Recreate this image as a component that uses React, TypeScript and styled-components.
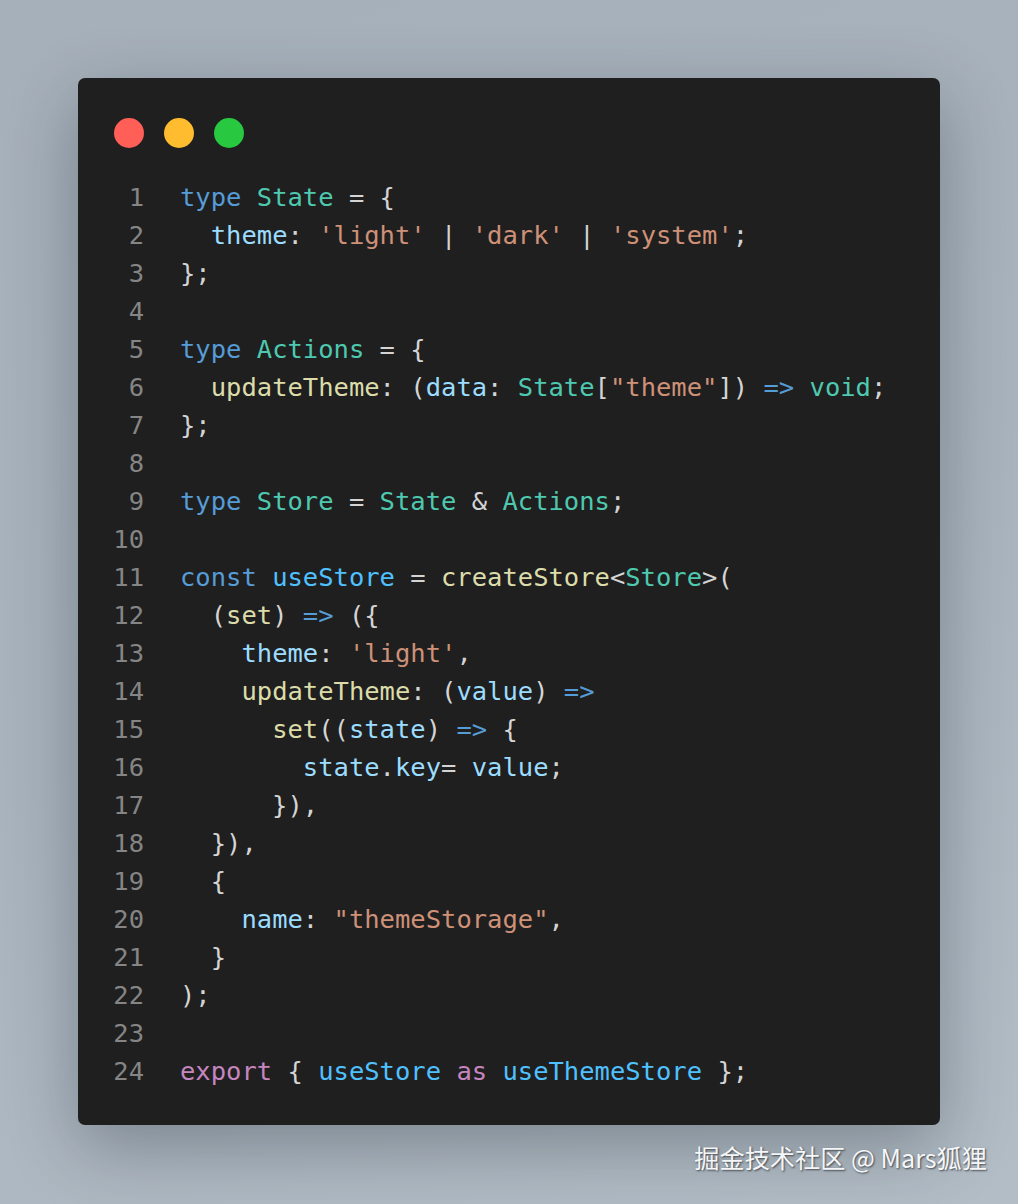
import React from "react";
import styled, { createGlobalStyle } from "styled-components";

const Global = createGlobalStyle`
  html, body { margin: 0; padding: 0; }
  body {
    width: 1018px;
    height: 1204px;
    overflow: hidden;
    background: linear-gradient(160deg, #a6b0ba 0%, #a9b3bd 50%, #b3bdc6 100%);
  }
`;

const Page = styled.div`
  width: 1018px;
  height: 1204px;
  box-sizing: border-box;
  padding: 78px 78px 0 78px;
  display: flex;
  flex-direction: column;
`;

const Window = styled.div`
  width: 862px;
  height: 1047px;
  box-sizing: border-box;
  background: #1f1f1f;
  border-radius: 7px;
  box-shadow: 0 22px 70px rgba(20, 28, 38, 0.32);
  padding: 40px 36px 0 35px;
  display: flex;
  flex-direction: column;
  gap: 30px;
`;

const Dots = styled.div`
  display: flex;
  gap: 20px;
  padding-left: 1px;
`;

const Dot = styled.span<{ $c: string }>`
  width: 30px;
  height: 30px;
  border-radius: 50%;
  background: ${(p) => p.$c};
`;

const Code = styled.div`
  display: flex;
  flex-direction: column;
  font-family: "DejaVu Sans Mono", "Liberation Mono", monospace;
  font-size: 25.5px;
  line-height: 38px;
`;

const Row = styled.div`
  display: flex;
  height: 38px;
  white-space: pre;
`;

const LineNo = styled.span`
  width: 31px;
  text-align: right;
  color: #858585;
  margin-right: 36px;
  flex: none;
`;

const Tok = styled.span<{ $c: string }>`
  color: ${(p) => p.$c};
`;

const Watermark = styled.div`
  align-self: flex-end;
  margin-right: -47px;
  margin-top: 14px;
  font-family: "Noto Sans CJK SC", "Noto Sans", sans-serif;
  font-size: 25.2px;
  color: #f4f6f8;
  text-shadow: 1px 1px 2px rgba(40, 44, 50, 0.8);
`;

const C = {
  kw: "#569cd6",
  ty: "#4ec9b0",
  pr: "#9cdcfe",
  st: "#ce9178",
  fn: "#dcdcaa",
  p: "#d4d4d4",
  ex: "#c586c0",
  cv: "#4fc1ff",
};

type T = [string, string];

const lines: T[][] = [
  [["type", C.kw], [" ", C.p], ["State", C.ty], [" = {", C.p]],
  [["  ", C.p], ["theme", C.pr], [": ", C.p], ["'light'", C.st], [" | ", C.p], ["'dark'", C.st], [" | ", C.p], ["'system'", C.st], [";", C.p]],
  [["};", C.p]],
  [],
  [["type", C.kw], [" ", C.p], ["Actions", C.ty], [" = {", C.p]],
  [["  ", C.p], ["updateTheme", C.fn], [": (", C.p], ["data", C.pr], [": ", C.p], ["State", C.ty], ["[", C.p], ["\"theme\"", C.st], ["]) ", C.p], ["=>", C.kw], [" ", C.p], ["void", C.ty], [";", C.p]],
  [["};", C.p]],
  [],
  [["type", C.kw], [" ", C.p], ["Store", C.ty], [" = ", C.p], ["State", C.ty], [" & ", C.p], ["Actions", C.ty], [";", C.p]],
  [],
  [["const", C.kw], [" ", C.p], ["useStore", C.cv], [" = ", C.p], ["createStore", C.fn], ["<", C.p], ["Store", C.ty], [">(", C.p]],
  [["  (", C.p], ["set", C.fn], [") ", C.p], ["=>", C.kw], [" ({", C.p]],
  [["    ", C.p], ["theme", C.pr], [": ", C.p], ["'light'", C.st], [",", C.p]],
  [["    ", C.p], ["updateTheme", C.fn], [": (", C.p], ["value", C.pr], [") ", C.p], ["=>", C.kw]],
  [["      ", C.p], ["set", C.fn], ["((", C.p], ["state", C.pr], [") ", C.p], ["=>", C.kw], [" {", C.p]],
  [["        ", C.p], ["state", C.pr], [".", C.p], ["key", C.pr], ["= ", C.p], ["value", C.pr], [";", C.p]],
  [["      }),", C.p]],
  [["  }),", C.p]],
  [["  {", C.p]],
  [["    ", C.p], ["name", C.pr], [": ", C.p], ["\"themeStorage\"", C.st], [",", C.p]],
  [["  }", C.p]],
  [[");", C.p]],
  [],
  [["export", C.ex], [" { ", C.p], ["useStore", C.cv], [" ", C.p], ["as", C.ex], [" ", C.p], ["useThemeStore", C.cv], [" };", C.p]],
];

export default function App() {
  return (
    <>
      <Global />
      <Page>
        <Window>
          <Dots>
            <Dot $c="#ff5f57" />
            <Dot $c="#febc2e" />
            <Dot $c="#28c840" />
          </Dots>
          <Code>
            {lines.map((toks, i) => (
              <Row key={i}>
                <LineNo>{i + 1}</LineNo>
                {toks.map(([text, color], j) => (
                  <Tok key={j} $c={color}>
                    {text}
                  </Tok>
                ))}
              </Row>
            ))}
          </Code>
        </Window>
        <Watermark>掘金技术社区 @ Mars狐狸</Watermark>
      </Page>
    </>
  );
}
